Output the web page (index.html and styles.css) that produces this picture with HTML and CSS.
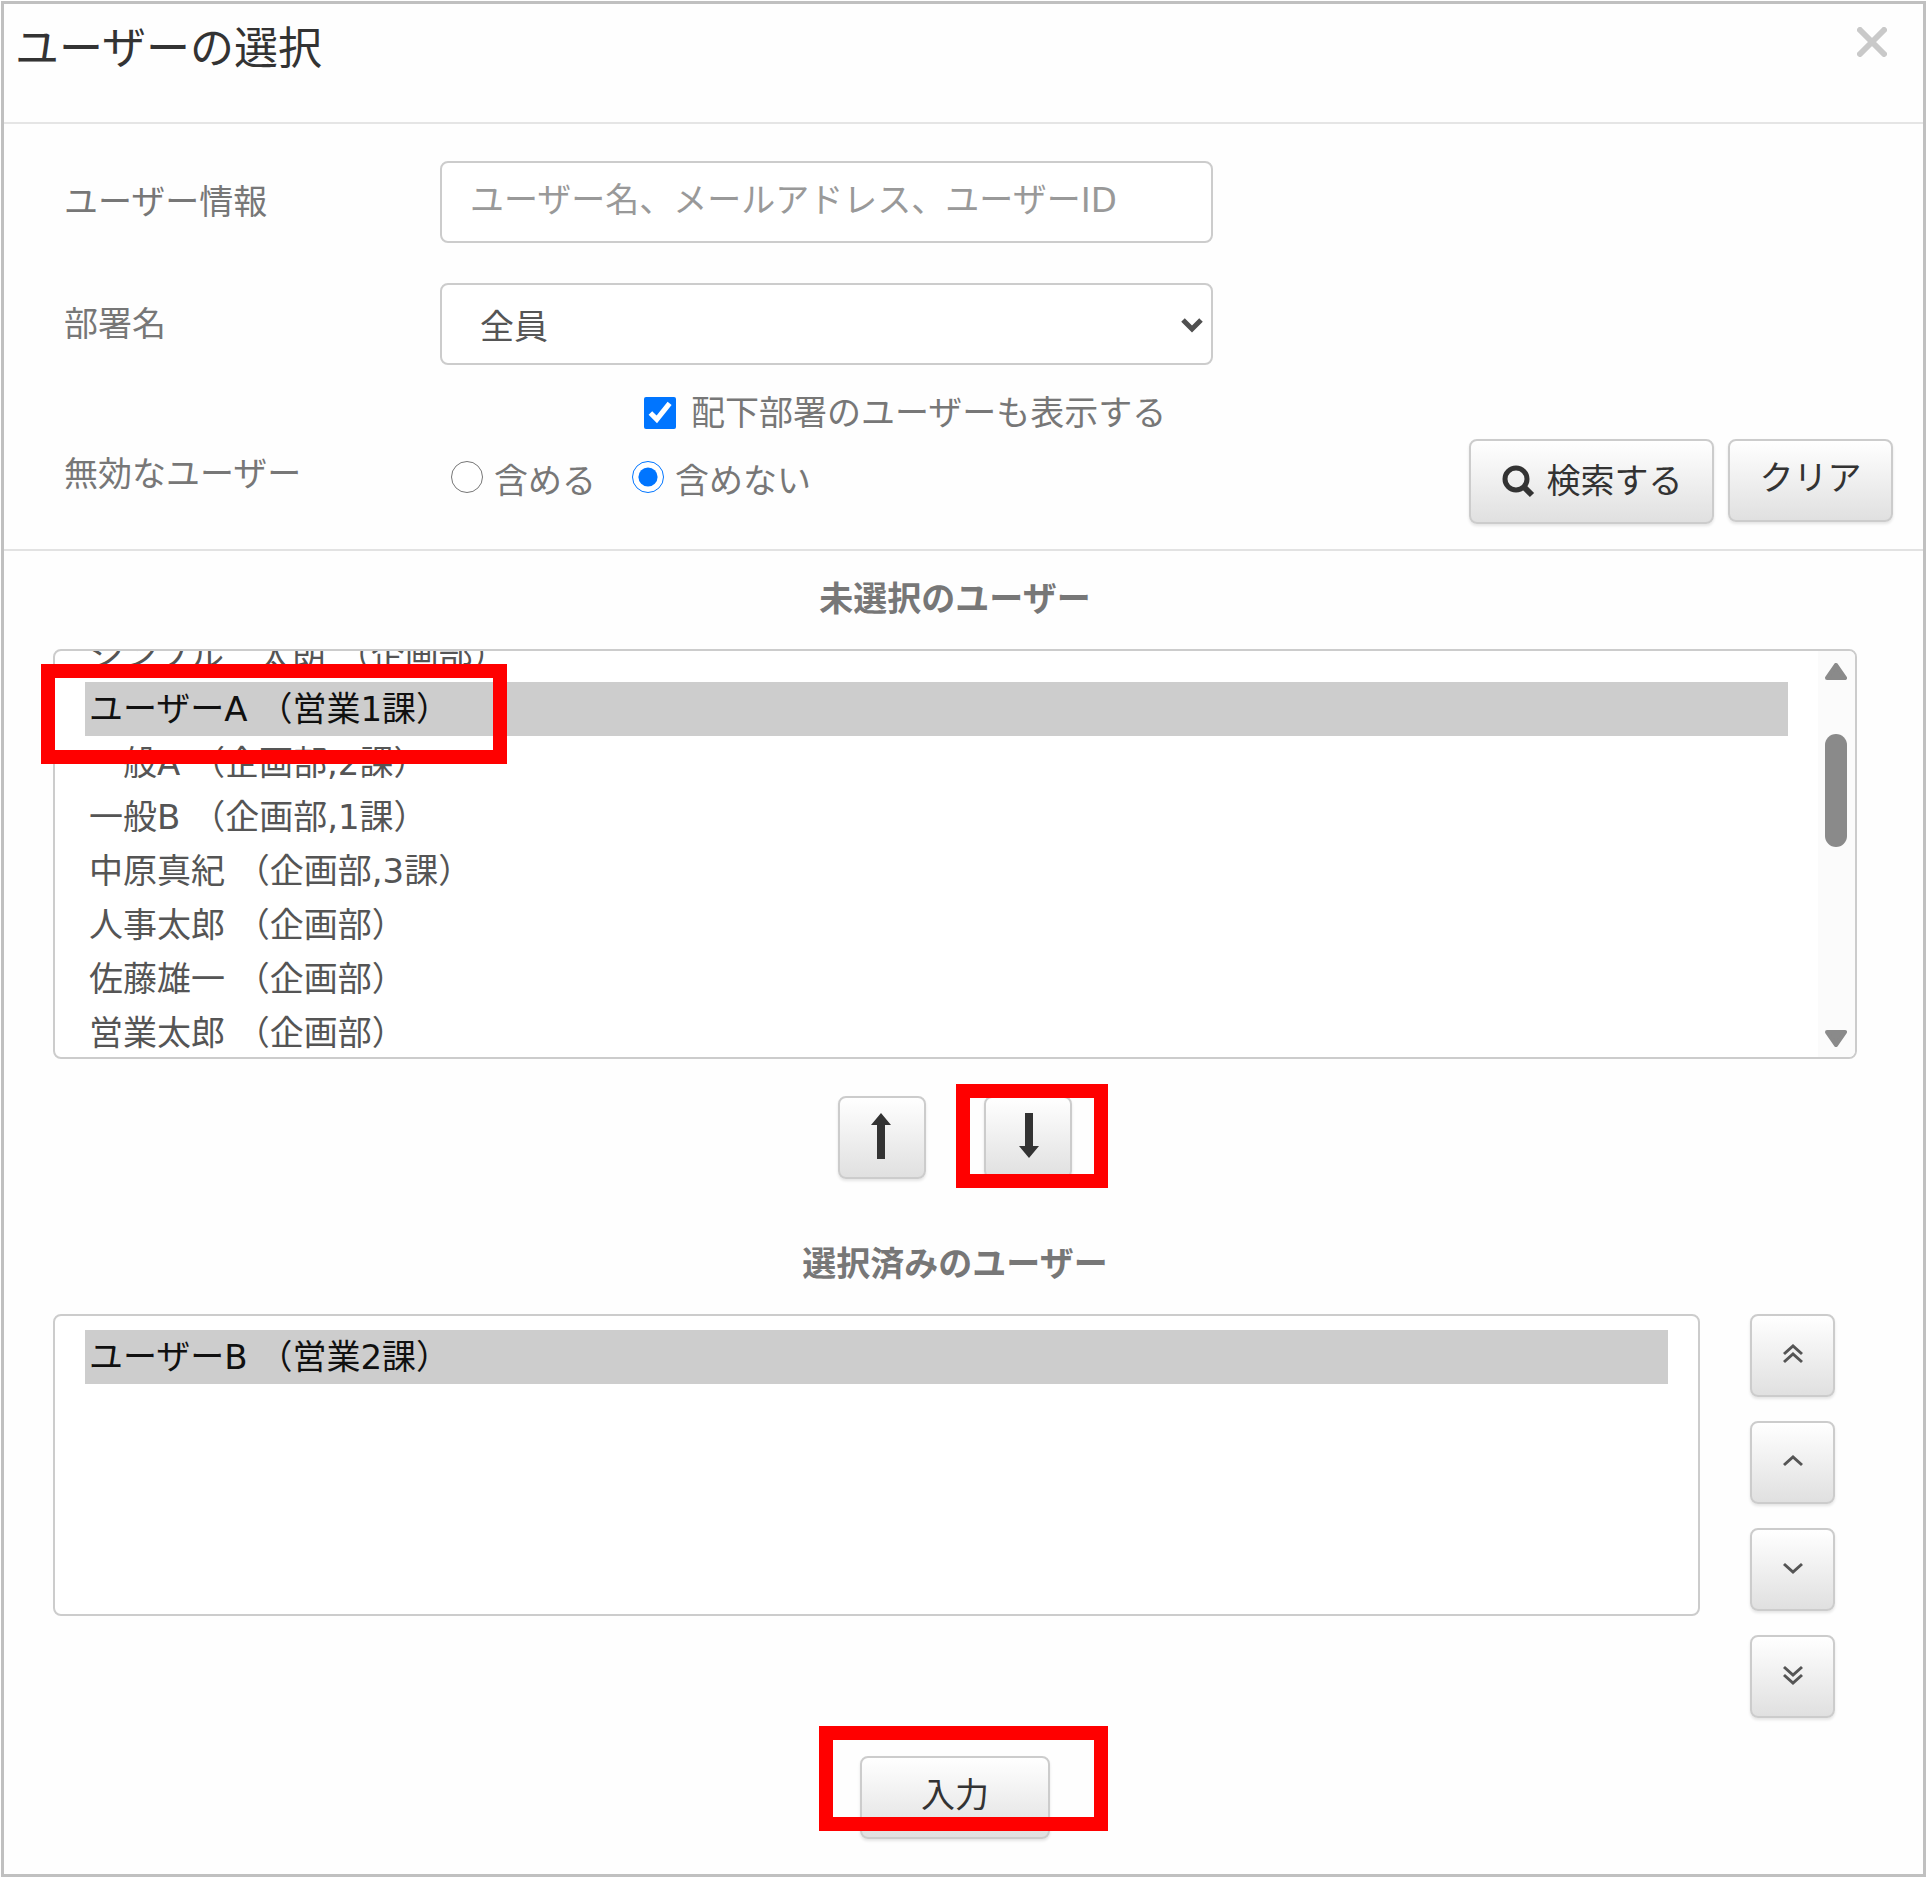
FILE: index.html
```html
<!DOCTYPE html>
<html lang="ja">
<head>
<meta charset="utf-8">
<title>ユーザーの選択</title>
<link rel="stylesheet" href="styles.css">
</head>
<body>
<main class="dialog">
  <header class="dialog-header">
    <h1 class="dialog-title">ユーザーの選択</h1>
    <button class="close" type="button" aria-label="閉じる">
      <svg width="30" height="30" viewBox="0 0 30 30"><path d="M3 3L27 27M27 3L3 27" fill="none" stroke="#c9c9c9" stroke-width="6" stroke-linecap="round"/></svg>
    </button>
  </header>

  <form class="search">
    <div class="fields">
      <label class="label" for="keyword">ユーザー情報</label>
      <input class="control" id="keyword" type="text" placeholder="ユーザー名、メールアドレス、ユーザーID">

      <label class="label second" for="dept">部署名</label>
      <div class="select-wrap second">
        <select class="control dropdown" id="dept"><option>全員</option></select>
        <svg class="caret" width="22" height="16" viewBox="0 0 22 16"><path d="M2 3L11 12L20 3" fill="none" stroke="#505050" stroke-width="5"/></svg>
      </div>

      <div class="check-row">
        <input class="tick" id="sub" type="checkbox" checked>
        <label for="sub">配下部署のユーザーも表示する</label>
      </div>

      <span class="label status-label" id="status">無効なユーザー</span>
      <div class="radio-row" role="radiogroup" aria-labelledby="status">
        <label class="radio"><input class="tick" type="radio" name="inactive">含める</label>
        <label class="radio"><input class="tick" type="radio" name="inactive" checked>含めない</label>
      </div>
    </div>
    <div class="actions">
      <button class="btn btn-search" type="button">
        <svg width="34" height="34" viewBox="0 0 34 34"><circle cx="15" cy="15" r="11" fill="none" stroke="#333" stroke-width="5"/><path d="M23 23L31 31" stroke="#333" stroke-width="6"/></svg>
        検索する
      </button>
      <button class="btn btn-clear" type="button">クリア</button>
    </div>
  </form>

  <section class="picker">
    <h2 class="list-title"><label for="available">未選択のユーザー</label></h2>
    <div class="list-wrap">
      <select class="list list-available" id="available" multiple>
        <option>シンプル　太朗 （企画部）</option>
        <option selected>ユーザーA （営業1課）</option>
        <option>一般A （企画部,2課）</option>
        <option>一般B （企画部,1課）</option>
        <option>中原真紀 （企画部,3課）</option>
        <option>人事太郎 （企画部）</option>
        <option>佐藤雄一 （企画部）</option>
        <option>営業太郎 （企画部）</option>
      </select>
      <div class="scrollbar" aria-hidden="true">
        <svg width="22" height="17" viewBox="0 0 22 17"><path d="M11 2L20 15H2Z" fill="#8a8a8a" stroke="#8a8a8a" stroke-width="4" stroke-linejoin="round"/></svg>
        <div class="track"><div class="thumb"></div></div>
        <svg width="22" height="17" viewBox="0 0 22 17"><path d="M11 15L20 2H2Z" fill="#8a8a8a" stroke="#8a8a8a" stroke-width="4" stroke-linejoin="round"/></svg>
      </div>
      <div class="mark mark-option"></div>
    </div>

    <div class="move">
      <button class="btn btn-move" type="button" aria-label="選択を解除">
        <svg width="22" height="48" viewBox="0 0 22 48"><path d="M10 0L20 12H14V46H6V12H0Z" fill="#333"/></svg>
      </button>
      <div class="marked">
        <button class="btn btn-move" type="button" aria-label="選択に追加">
          <svg width="22" height="48" viewBox="0 0 22 48"><path d="M12 45L22 33H16V0H8V33H2Z" fill="#333"/></svg>
        </button>
        <div class="mark mark-down"></div>
      </div>
    </div>

    <h2 class="list-title"><label for="chosen">選択済みのユーザー</label></h2>
    <div class="chosen">
      <select class="list list-chosen" id="chosen" multiple>
        <option selected>ユーザーB （営業2課）</option>
      </select>
      <div class="order">
        <button class="btn btn-order" type="button" aria-label="先頭へ">
          <svg width="20" height="20" viewBox="0 0 20 20"><path d="M1 10L10 2L19 10M1 18L10 10L19 18"/></svg>
        </button>
        <button class="btn btn-order" type="button" aria-label="上へ">
          <svg width="20" height="20" viewBox="0 0 20 20"><path d="M1 14L10 6L19 14"/></svg>
        </button>
        <button class="btn btn-order" type="button" aria-label="下へ">
          <svg width="20" height="20" viewBox="0 0 20 20"><path d="M1 6L10 14L19 6"/></svg>
        </button>
        <button class="btn btn-order" type="button" aria-label="末尾へ">
          <svg width="20" height="20" viewBox="0 0 20 20"><path d="M1 2L10 10L19 2M1 10L10 18L19 10"/></svg>
        </button>
      </div>
    </div>

    <div class="submit">
      <div class="marked">
        <button class="btn btn-submit" type="button">入力</button>
        <div class="mark mark-submit"></div>
      </div>
    </div>
  </section>
</main>
<script src="script.js"></script>
</body>
</html>
```
FILE: styles.css
```css
* {
  box-sizing: border-box;
}

body {
  margin: 1px;
  background: #fff;
  color: #777;
  font-family: "DejaVu Sans", "Noto Sans CJK JP", sans-serif;
  font-size: 34px;
  line-height: 48px;
}

button,
input,
select {
  margin: 0;
  font: inherit;
}

svg {
  display: block;
  flex: none;
}

.dialog {
  border: 3px solid #c0c0c0;
  background: #fefefe;
}

/* header */
.dialog-header {
  display: flex;
  justify-content: space-between;
  align-items: flex-start;
  padding: 12px 36px 40px 11px;
  border-bottom: 2px solid #e5e5e5;
}

.dialog-title {
  margin: 0;
  color: #333;
  font-size: 44px;
  font-weight: 400;
  line-height: 66px;
}

.close {
  margin-top: 11px;
  padding: 0;
  border: 0;
  background: none;
}

/* search form */
.search {
  display: flex;
  justify-content: space-between;
  align-items: flex-end;
  padding: 37px 30px 25px 60px;
  border-bottom: 2px solid #e2e2e2;
}

.fields {
  display: grid;
  grid-template-columns: 376px 773px;
  align-items: center;
  padding-bottom: 16px;
}

.label {
  line-height: 40px;
}

.second {
  margin-top: 40px;
}

.control {
  display: block;
  width: 100%;
  height: 82px;
  padding: 0 28px;
  border: 2px solid #ccc;
  border-radius: 8px;
  background: #fff;
  color: #555;
}

input.control {
  padding-bottom: 4px;
}

.control::placeholder {
  color: #999;
  opacity: 1;
}

.select-wrap {
  position: relative;
}

.dropdown {
  appearance: none;
  padding-top: 6px;
  padding-left: 38px;
}

.caret {
  position: absolute;
  top: 34px;
  right: 10px;
  pointer-events: none;
}

.check-row {
  grid-column: 2;
  display: flex;
  align-items: center;
  gap: 15px;
  margin: 24px 0 17px 204px;
}

.tick {
  flex: none;
  width: 32px;
  height: 32px;
  accent-color: #0075ff;
}

.status-label {
  align-self: start;
}

.radio-row {
  display: flex;
  gap: 36px;
  padding-left: 11px;
}

.radio {
  display: flex;
  gap: 11px;
  line-height: 54px;
}

.radio .tick {
  margin-top: 7px;
}

.actions {
  display: flex;
  align-items: flex-start;
  gap: 14px;
}

/* buttons */
.btn {
  display: flex;
  justify-content: center;
  align-items: center;
  height: 83px;
  padding: 0 0 4px;
  border: 2px solid #ccc;
  border-radius: 8px;
  background: linear-gradient(#fff, #e0e0e0);
  box-shadow: 0 2px 3px rgba(0, 0, 0, 0.1);
  color: #333;
}

.btn-search {
  gap: 12px;
  width: 245px;
  height: 85px;
  padding-bottom: 2px;
}

.btn-clear {
  width: 165px;
  padding-bottom: 6px;
}

.btn-move {
  width: 88px;
  padding-bottom: 2px;
}

.btn-order {
  width: 85px;
}

.btn-order path {
  fill: none;
  stroke: #555;
  stroke-width: 3;
}

.btn-submit {
  width: 190px;
  padding-bottom: 6px;
}

/* user lists */
.picker {
  padding: 24px 66px 35px 49px;
}

.list-title {
  margin: 0 0 26px;
  font-size: 34px;
  font-weight: 700;
  text-align: center;
}

.list-wrap {
  position: relative;
}

.list {
  display: block;
  width: 100%;
  padding: 14px 30px;
  overflow: hidden;
  border: 2px solid #ccc;
  border-radius: 8px;
  background: #fff;
  color: #555;
}

.list option {
  height: 54px;
  padding: 0 4px 10px;
  line-height: 44px;
}

.list option:checked {
  background: #cdcdcd;
  color: #101010;
}

.list-available {
  height: 410px;
  padding-right: 67px;
}

.list-chosen {
  flex: 1;
  width: auto;
  min-width: 0;
  height: 302px;
}

.scrollbar {
  position: absolute;
  top: 2px;
  right: 2px;
  bottom: 2px;
  display: flex;
  flex-direction: column;
  align-items: center;
  width: 37px;
  padding: 12px 2px 10px 0;
  border-radius: 0 6px 6px 0;
  background: #fbfbfb;
}

.track {
  flex: 1;
  padding-top: 54px;
}

.thumb {
  width: 22px;
  height: 113px;
  border-radius: 11px;
  background: #8a8a8a;
}

.move {
  display: flex;
  justify-content: center;
  gap: 58px;
  padding: 37px 0 61px;
}

.chosen {
  display: flex;
  align-items: flex-start;
  gap: 50px;
  padding-right: 22px;
}

.order {
  display: grid;
  gap: 24px;
}

.submit {
  display: flex;
  justify-content: center;
  padding-top: 38px;
}

/* red annotation frames */
.marked {
  position: relative;
}

.mark {
  position: absolute;
  border: 14px solid #f00;
  pointer-events: none;
}

.mark-option {
  top: 15px;
  left: -12px;
  width: 466px;
  height: 100px;
}

.mark-down {
  top: -12px;
  left: -28px;
  width: 152px;
  height: 104px;
}

.mark-submit {
  top: -30px;
  left: -41px;
  width: 289px;
  height: 105px;
}
```
FILE: script.js
```js
// Open the list scrolled so that the selected user is the first full row.
document.getElementById("available").scrollTop = 37;
```
